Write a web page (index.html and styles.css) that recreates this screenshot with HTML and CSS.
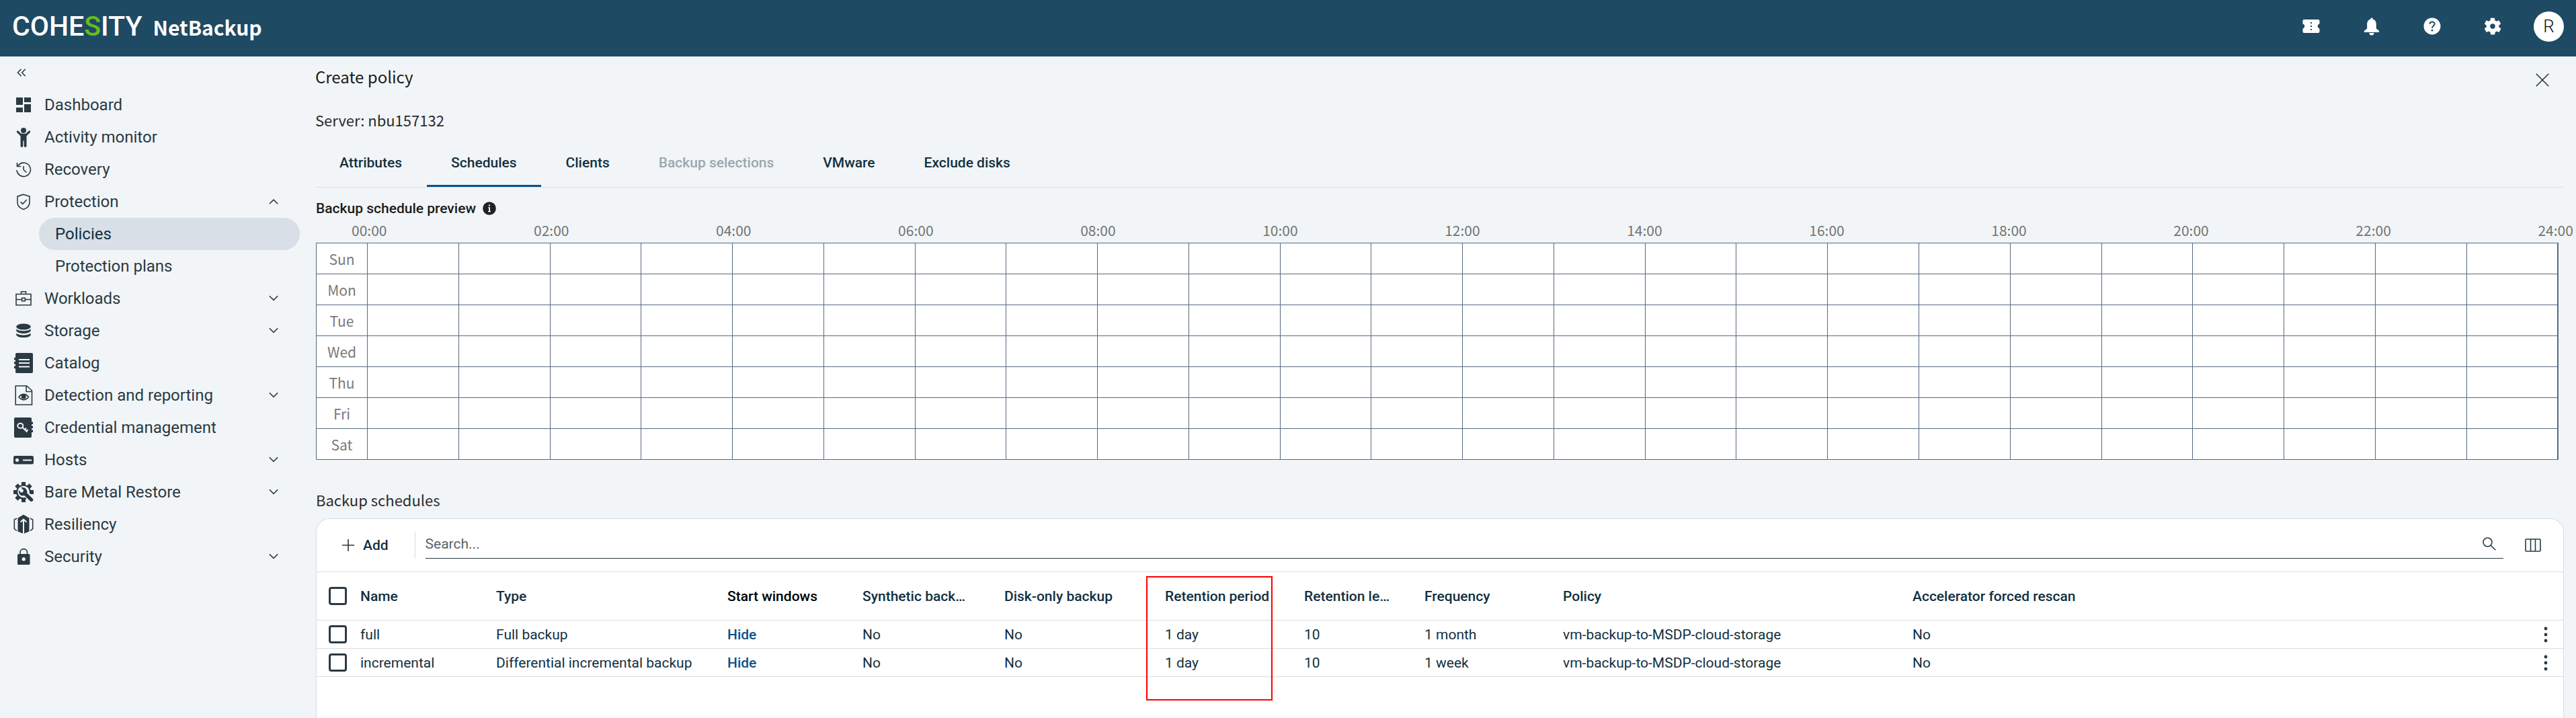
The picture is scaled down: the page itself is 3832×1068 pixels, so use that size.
FILE: index.html
```html
<!DOCTYPE html>
<html lang="en">
<head>
<meta charset="utf-8">
<title>Create policy - NetBackup</title>
<link rel="stylesheet" href="styles.css">
</head>
<body>
<header class="topbar">
  <a class="brand" href="#"><span class="brand-name">COHE<span class="brand-accent">S</span>ITY</span><span class="product">NetBackup</span></a>
  <div class="top-actions">
    <button class="icon-btn" aria-label="Licenses"><svg width="30" height="30" viewBox="0 0 30 30"><path fill="#fff" d="M4.500 5h21a2 2 0 0 1 2 2v4.500a3.600 3.600 0 0 0 0 7V23a2 2 0 0 1-2 2h-21a2 2 0 0 1-2-2v-4.500a3.600 3.600 0 0 0 0-7V7a2 2 0 0 1 2-2z"/><path stroke="#1e4a63" stroke-width="2" stroke-dasharray="2 3" d="M15 9v13"/></svg></button>
    <button class="icon-btn" aria-label="Notifications"><svg width="30" height="30" viewBox="0 0 30 30"><path fill="#fff" d="M15 2.500c1.200 0 1.800.8 1.800 1.900 3.200.9 5 3.700 5 7.100v7l4.200 3.200V24H4v-2.300l4.200-3.200v-7c0-3.400 1.800-6.200 5-7.100 0-1.100.6-1.900 1.800-1.900zM11.500 25h7a3.500 3.500 0 0 1-7 0z"/></svg></button>
    <button class="icon-btn" aria-label="Help"><svg width="30" height="30" viewBox="0 0 30 30"><circle cx="15" cy="15" r="12.500" fill="#fff"/><path fill="none" stroke="#1e4a63" stroke-width="2" d="M11.500 11.800c0-4.500 7.200-4.500 7.200-.2 0 2.700-3.700 3.200-3.700 6.200"/><circle cx="15" cy="21.200" r="1.400" fill="#1e4a63"/></svg></button>
    <button class="icon-btn" aria-label="Settings"><svg width="30" height="30" viewBox="0 0 24 24"><path fill="#fff" d="M19.400 13c0-.3.100-.6.100-1s0-.7-.1-1l2.100-1.600c.2-.2.200-.4.100-.6l-2-3.500c-.1-.2-.4-.3-.6-.2l-2.500 1c-.5-.4-1.100-.7-1.700-1l-.4-2.600c0-.2-.2-.4-.5-.4h-4c-.2 0-.5.200-.5.400L9.200 5.100c-.6.3-1.200.6-1.700 1L5 5.100c-.2-.1-.5 0-.6.200l-2 3.500c-.1.200-.1.500.1.600L4.600 11c0 .3-.1.600-.1 1s0 .7.100 1l-2.100 1.600c-.2.200-.2.400-.1.600l2 3.500c.1.200.4.300.6.200l2.500-1c.5.400 1.100.7 1.700 1l.4 2.600c0 .2.200.4.500.4h4c.2 0 .5-.2.500-.4l.4-2.600c.6-.3 1.200-.6 1.700-1l2.500 1c.2.100.5 0 .6-.2l2-3.500c.1-.2.100-.5-.1-.6L19.400 13zM12 15a3 3 0 1 1 0-6 3 3 0 0 1 0 6z"/></svg></button>
    <button class="avatar" aria-label="Account">R</button>
  </div>
</header>
<div class="shell">
<nav class="sidebar" aria-label="Main">
  <button class="collapse" aria-label="Collapse menu"><svg width="14" height="12" viewBox="0 0 14 12"><path class="line" d="M6.500.8L1.500 6l5 5.200M12.700.8L7.700 6l5 5.200"/></svg></button>
  <ul class="nav">
    <li><a href="#"><svg class="nav-icon" viewBox="0 0 30 30"><path d="M4 4h10v11H4zM16 4h10v7H16zM4 19h10v7H4zM16 14h10v12H16z"/></svg><span>Dashboard</span></a></li>
    <li><a href="#"><svg class="nav-icon" viewBox="0 0 30 30"><circle cx="15" cy="5" r="4"/><path d="M7 5.500l4.500 4.200h7L23 5.500a1.600 1.600 0 0 1 2 2.300l-5.500 5.400V28a1.800 1.800 0 0 1-3.800 0v-7.500h-1.400V28a1.800 1.800 0 0 1-3.800 0V13.200L5 7.800a1.600 1.600 0 0 1 2-2.300z"/></svg><span>Activity monitor</span></a></li>
    <li><a href="#"><svg class="nav-icon" viewBox="0 0 30 30"><path class="line" d="M5 16a10.200 10.200 0 1 0 2.800-7.700L5.300 10.700M5.500 5v5.500h5.800M15 10v5.500l4.500 4"/></svg><span>Recovery</span></a></li>
    <li><a href="#" aria-expanded="true"><svg class="nav-icon" viewBox="0 0 30 30"><path class="line" d="M15 4.200l9 3v9c0 5-4 8.500-9 10.300-5-1.800-9-5.300-9-10.300v-9zM10.500 15.300l3.300 3 6-6.300"/></svg><span>Protection</span><svg class="chev" viewBox="0 0 14 14"><path class="line" d="M.8 10.300L7 4.200l6.200 6.100"/></svg></a>
      <ul class="subnav">
        <li><a class="active" href="#">Policies</a></li>
        <li><a href="#">Protection plans</a></li>
      </ul></li>
    <li><a href="#"><svg class="nav-icon" viewBox="0 0 30 30"><path class="line" d="M4 8.500h22v16.300H4zM11.500 8.500V4.700h7v3.800M4 16.500h8.500M17.500 16.500H26M12.700 14.300h4.600v4.400h-4.600z"/></svg><span>Workloads</span><svg class="chev" viewBox="0 0 14 14"><path class="line" d="M.8 3.200L7 9.300l6.200-6.100"/></svg></a></li>
    <li><a href="#"><svg class="nav-icon" viewBox="0 0 30 30"><ellipse cx="15" cy="9" rx="10.800" ry="4.600"/><path d="M4.200 12.300c3 4 18.600 4 21.600 0v2.400c-1.500 5.600-20.100 5.600-21.600 0zM4.200 18.500c3 4 18.600 4 21.600 0v2.400c-1.500 5.600-20.100 5.600-21.600 0z"/></svg><span>Storage</span><svg class="chev" viewBox="0 0 14 14"><path class="line" d="M.8 3.200L7 9.300l6.200-6.100"/></svg></a></li>
    <li><a href="#"><svg class="nav-icon" viewBox="0 0 30 30"><rect x="3" width="26" height="30" rx="2"/><path d="M1 7h3v3.500H1zM1 13h3v3.500H1zM1 19.500h3V23H1z"/><path class="cut" d="M8 10h16M8 15h16M8 20.500h16"/></svg><span>Catalog</span></a></li>
    <li><a href="#"><svg class="nav-icon" viewBox="0 0 30 30"><path class="line" d="M3.200 1h16.500L27.500 8v21H3.200zM19 1v8.500h8.500M8 17.500c4-5.500 10.500-5.500 14.500 0-4 5.500-10.500 5.500-14.500 0z"/><circle cx="15.200" cy="17" r="3.600"/></svg><span>Detection and reporting</span><svg class="chev" viewBox="0 0 14 14"><path class="line" d="M.8 3.200L7 9.300l6.200-6.100"/></svg></a></li>
    <li><a href="#"><svg class="nav-icon" viewBox="0 0 30 30"><rect x="1" width="26" height="30" rx="2"/><path d="M26 6.500h3V10h-3zM26 12.500h3V16h-3zM26 18.500h3V22h-3z"/><ellipse class="cut" cx="10.300" cy="12.300" rx="4" ry="3.600"/><path class="cut" d="M13 14.500l7.500 7M16.800 18l2.200-2.200M19.300 20.200l2.200-2.200"/></svg><span>Credential management</span></a></li>
    <li><a href="#"><svg class="nav-icon" viewBox="0 0 30 30"><rect y="9" width="30" height="12.500" rx="2.500"/><circle cx="5.500" cy="15.300" r="2.600" fill="#f1f5f7"/><path class="cut" d="M14 15.500h13"/></svg><span>Hosts</span><svg class="chev" viewBox="0 0 14 14"><path class="line" d="M.8 3.200L7 9.300l6.200-6.100"/></svg></a></li>
    <li><a href="#"><svg class="nav-icon" viewBox="0 0 30 30"><circle cx="15" cy="15" r="11"/><path fill="none" stroke="#2b3a42" stroke-width="6" d="M15 0v5M15 25v5M0 15h5M25 15h5M4.400 4.400L8 8M22 8l3.600-3.600M4.400 25.600L8 22"/><circle cx="15" cy="14.500" r="8.800" fill="#f1f5f7"/><path fill="none" stroke="#f1f5f7" stroke-width="9" d="M19 18l9 9"/><path d="M11 8.300l4 3.700-.8 3-3 .8-3.300-3.800c-.8 6 3.600 9.500 8.300 8l8.800 8.500c2.600 1.800 5.800-1 3.700-3.800l-8.500-8.400c1.200-5.300-3.500-9.500-9.200-8z"/></svg><span>Bare Metal Restore</span><svg class="chev" viewBox="0 0 14 14"><path class="line" d="M.8 3.200L7 9.300l6.200-6.100"/></svg></a></li>
    <li><a href="#"><svg class="nav-icon" viewBox="0 0 30 30"><path d="M15 .5l8.500 5v20L15 29l-8.500-3.500v-20z"/><path class="line" d="M5 6L1.300 8v13.500L5 24.500M25 6l3.700 2v13.500L25 24.500"/><path class="cut" d="M15 29V8.500M10.500 11.500L15 7.500l4.500 4"/></svg><span>Resiliency</span></a></li>
    <li><a href="#"><svg class="nav-icon" viewBox="0 0 30 30"><rect x="6" y="11" width="18.500" height="16" rx="1.500"/><path class="line" d="M10 12V8.500c0-6.500 10.500-6.500 10.500 0V12"/><circle cx="15.200" cy="18.700" r="2.600" fill="#f1f5f7"/></svg><span>Security</span><svg class="chev" viewBox="0 0 14 14"><path class="line" d="M.8 3.200L7 9.300l6.200-6.100"/></svg></a></li>
  </ul>
</nav>
<main class="main">
  <div class="title-row">
    <h1>Create policy</h1>
    <button class="close" aria-label="Close"><svg width="20" height="20" viewBox="0 0 20 20"><path class="line" d="M.7.7l18.600 18.600M19.300.7L.7 19.300"/></svg></button>
  </div>
  <p class="server">Server: nbu157132</p>
  <div class="tabs" role="tablist">
    <button role="tab">Attributes</button>
    <button role="tab" class="selected" aria-selected="true">Schedules</button>
    <button role="tab">Clients</button>
    <button role="tab" disabled>Backup selections</button>
    <button role="tab">VMware</button>
    <button role="tab">Exclude disks</button>
  </div>
  <h2 class="preview-title">Backup schedule preview <svg width="20" height="20" viewBox="0 0 20 20"><circle cx="10" cy="10" r="9.800" fill="#1f2223"/><path fill="#fff" d="M9 4.500h2v2H9zM8.200 8.200H11V14h1v1.200H8V14h1.200V9.400h-1z"/></svg></h2>
  <div class="hours"><span>00:00</span><span>02:00</span><span>04:00</span><span>06:00</span><span>08:00</span><span>10:00</span><span>12:00</span><span>14:00</span><span>16:00</span><span>18:00</span><span>20:00</span><span>22:00</span><span>24:00</span></div>
  <table class="week">
    <tr><th scope="row">Sun</th><td></td><td></td><td></td><td></td><td></td><td></td><td></td><td></td><td></td><td></td><td></td><td></td><td></td><td></td><td></td><td></td><td></td><td></td><td></td><td></td><td></td><td></td><td></td><td></td></tr>
    <tr><th scope="row">Mon</th><td></td><td></td><td></td><td></td><td></td><td></td><td></td><td></td><td></td><td></td><td></td><td></td><td></td><td></td><td></td><td></td><td></td><td></td><td></td><td></td><td></td><td></td><td></td><td></td></tr>
    <tr><th scope="row">Tue</th><td></td><td></td><td></td><td></td><td></td><td></td><td></td><td></td><td></td><td></td><td></td><td></td><td></td><td></td><td></td><td></td><td></td><td></td><td></td><td></td><td></td><td></td><td></td><td></td></tr>
    <tr><th scope="row">Wed</th><td></td><td></td><td></td><td></td><td></td><td></td><td></td><td></td><td></td><td></td><td></td><td></td><td></td><td></td><td></td><td></td><td></td><td></td><td></td><td></td><td></td><td></td><td></td><td></td></tr>
    <tr><th scope="row">Thu</th><td></td><td></td><td></td><td></td><td></td><td></td><td></td><td></td><td></td><td></td><td></td><td></td><td></td><td></td><td></td><td></td><td></td><td></td><td></td><td></td><td></td><td></td><td></td><td></td></tr>
    <tr><th scope="row">Fri</th><td></td><td></td><td></td><td></td><td></td><td></td><td></td><td></td><td></td><td></td><td></td><td></td><td></td><td></td><td></td><td></td><td></td><td></td><td></td><td></td><td></td><td></td><td></td><td></td></tr>
    <tr><th scope="row">Sat</th><td></td><td></td><td></td><td></td><td></td><td></td><td></td><td></td><td></td><td></td><td></td><td></td><td></td><td></td><td></td><td></td><td></td><td></td><td></td><td></td><td></td><td></td><td></td><td></td></tr>
  </table>
  <h2 class="list-title">Backup schedules</h2>
  <section class="card">
    <div class="toolbar">
      <button class="add"><svg width="18" height="18" viewBox="0 0 18 18"><path class="line" d="M9 0v18M0 9h18"/></svg>Add</button>
      <div class="search">
        <input type="text" placeholder="Search..." aria-label="Search">
        <svg width="20" height="20" viewBox="0 0 20 20"><circle class="line" cx="7.500" cy="7.500" r="6.500"/><path class="line" d="M12 12l7.300 7.300"/></svg>
      </div>
      <button class="columns" aria-label="Columns"><svg width="24" height="20" viewBox="0 0 24 20"><rect class="line" x="1" y="1" width="22" height="18" rx="1"/><path class="line" d="M8.500 1v18M15.500 1v18"/></svg></button>
    </div>
    <table class="list">
      <colgroup><col class="c-check"><col class="c-name"><col class="c-type"><col class="c-start"><col class="c-synth"><col class="c-disk"><col class="c-period"><col class="c-level"><col class="c-freq"><col class="c-policy"><col><col class="c-menu"></colgroup>
      <thead>
        <tr><th><input type="checkbox" aria-label="Select all"></th><th>Name</th><th>Type</th><th class="plain">Start windows</th><th>Synthetic back…</th><th>Disk-only backup</th><th class="marked">Retention period</th><th>Retention le…</th><th>Frequency</th><th>Policy</th><th>Accelerator forced rescan</th><th></th></tr>
      </thead>
      <tbody>
        <tr><td><input type="checkbox" aria-label="Select full"></td><td>full</td><td>Full backup</td><td><a href="#">Hide</a></td><td>No</td><td>No</td><td>1 day</td><td>10</td><td>1 month</td><td>vm-backup-to-MSDP-cloud-storage</td><td>No</td><td><button class="menu" aria-label="Actions for full"><svg width="6" height="24" viewBox="0 0 6 24"><circle cx="3" cy="3" r="2.400"/><circle cx="3" cy="12" r="2.400"/><circle cx="3" cy="21" r="2.400"/></svg></button></td></tr>
        <tr><td><input type="checkbox" aria-label="Select incremental"></td><td>incremental</td><td>Differential incremental backup</td><td><a href="#">Hide</a></td><td>No</td><td>No</td><td>1 day</td><td>10</td><td>1 week</td><td>vm-backup-to-MSDP-cloud-storage</td><td>No</td><td><button class="menu" aria-label="Actions for incremental"><svg width="6" height="24" viewBox="0 0 6 24"><circle cx="3" cy="3" r="2.400"/><circle cx="3" cy="12" r="2.400"/><circle cx="3" cy="21" r="2.400"/></svg></button></td></tr>
      </tbody>
    </table>
  </section>
</main>
</div>
</body>
</html>
```
FILE: styles.css
```css
:root {
  --ink: #2b3a42;
  --text: #12303f;
  --page: #f1f5f7;
  --rule: #dadcde;
  --grid: #586a7f;
  --blue: #06518c;
  --sans: Roboto, "Liberation Sans", sans-serif;
  --source: "Noto Sans CJK SC", "Noto Sans", sans-serif;
}

*, *::after { box-sizing: border-box; }

body {
  margin: 0;
  min-height: 100vh;
  display: flex;
  flex-direction: column;
  background: var(--page);
  color: var(--text);
  font: 400 21px/28px var(--sans);
}

button {
  padding: 0;
  border: 0;
  background: none;
  color: inherit;
  font: inherit;
  cursor: pointer;
}

svg { display: block; flex: none; fill: var(--ink); }
.line { fill: none; stroke: var(--ink); stroke-width: 1.600; }
.cut { fill: none; stroke: var(--page); stroke-width: 2; }

/* Top bar */
.topbar {
  display: flex;
  align-items: center;
  justify-content: space-between;
  height: 84px;
  padding: 0 18px 6px 18px;
  background: #1e4a63;
}
.brand {
  display: flex;
  align-items: baseline;
  gap: 16px;
  color: #fff;
  text-decoration: none;
}
.brand-name { font: 500 41px/48px var(--sans); }
.brand-accent { color: #67bd1b; }
.product { font: 700 30px/48px var(--source); }
.top-actions { display: flex; align-items: center; gap: 60px; }
.avatar {
  width: 45px;
  height: 45px;
  margin-left: -14px;
  border-radius: 50%;
  background: #fff;
  color: #111;
  font-size: 26px;
  font-weight: 300;
}

/* Side navigation */
.shell { display: flex; flex: 1; }
.sidebar { flex: none; width: 469px; }
.collapse { display: block; margin: 18px 0 18px 25px; }
.nav, .subnav { margin: 0; padding: 0; list-style: none; }
.nav a {
  display: flex;
  align-items: center;
  gap: 16px;
  height: 48px;
  padding: 0 55px 0 20px;
  color: var(--ink);
  font-size: 24px;
  text-decoration: none;
}
.nav-icon { width: 30px; height: 30px; }
.chev { width: 14px; height: 14px; margin-left: auto; }
.subnav a { margin: 0 23px 0 58px; padding: 0 24px; border-radius: 24px; }
.subnav .active { background: #d8dfe7; color: var(--text); }

/* Page */
.main {
  flex: 1;
  min-width: 0;
  display: flex;
  flex-direction: column;
  padding: 12px 18px 0 0;
}
h1, h2, p { margin: 0; }
.title-row {
  display: flex;
  align-items: center;
  justify-content: space-between;
  padding-right: 22px;
}
.close { padding-top: 10px; }
h1 { font: 400 24px/36px var(--source); color: #1b1b1b; }
.server { margin-top: 30px; font: 400 22px/32px var(--source); color: #2b2b2b; }

.tabs { display: flex; gap: 1px; margin-top: 12px; border-bottom: 1px solid #dbe1e8; }
.tabs button {
  height: 72px;
  padding: 0 36px;
  border: solid transparent;
  border-width: 3px 0;
  font-weight: 500;
}
.tabs .selected { border-bottom-color: var(--blue); }
.tabs button:disabled { color: #9aa7af; }

.preview-title {
  display: flex;
  align-items: center;
  gap: 10px;
  margin: 17px 0 4px 1px;
  font: 500 21px/28px var(--sans);
  color: #1b1b1b;
}

/* Weekly grid */
.hours {
  display: flex;
  justify-content: space-between;
  margin: 0 -14px 5px 54px;
  font: 400 21px/28px var(--source);
  color: #737373;
}
.week {
  table-layout: fixed;
  width: calc(100% - 9px);
  margin-left: 1px;
  border-collapse: collapse;
  border-right: 2px solid var(--grid);
  background: #fff;
}
.week th, .week td { height: 46px; padding: 0; border: 1px solid var(--grid); }
.week th { width: 76px; font: 400 21px/28px var(--source); color: #7a7a7a; }
.week td:last-child { border-right-width: 2px; }

.list-title { margin: 43px 0 12px 1px; font: 400 22px/32px var(--source); color: #2b2b2b; }

/* Schedule list */
.card {
  flex: 1;
  margin-left: 1px;
  border: 1px solid var(--rule);
  border-bottom: 0;
  border-radius: 20px 20px 0 0;
  background: #fff;
}
.toolbar {
  display: flex;
  align-items: center;
  height: 79px;
  padding: 0 33px 0 38px;
  border-bottom: 1px solid var(--rule);
}
.add {
  display: flex;
  align-items: center;
  gap: 13px;
  height: 40px;
  padding-right: 39px;
  border-right: 1px solid var(--rule);
  font-weight: 500;
}
.search {
  flex: 1;
  display: flex;
  align-items: center;
  height: 40px;
  margin: 0 32px 0 15px;
  padding: 0 11px 4px 0;
  border-bottom: 1px solid var(--ink);
}
.search input {
  flex: 1;
  padding: 0;
  border: 0;
  outline: 0;
  background: none;
  font: inherit;
}
.search input::placeholder { color: #5b6368; opacity: 1; }

.list { table-layout: fixed; width: 100%; border-collapse: separate; border-spacing: 0; }
.list th, .list td {
  height: 42px;
  padding: 0;
  border-bottom: 1px solid var(--rule);
  text-align: left;
  white-space: nowrap;
}
.list th { height: 72px; font-weight: 500; }
.list .plain { color: #000; }
.list a { color: var(--blue); font-weight: 500; text-decoration: none; }
.list input {
  appearance: none;
  display: block;
  width: 27px;
  height: 27px;
  margin: 0 0 0 18px;
  border: 3px solid var(--ink);
  border-radius: 4px;
}
.menu { display: block; margin-left: auto; margin-right: 23px; }
.c-check { width: 65px; }
.c-name { width: 202px; }
.c-type { width: 344px; }
.c-start { width: 201px; }
.c-synth { width: 211px; }
.c-disk { width: 239px; }
.c-period { width: 207px; }
.c-level { width: 179px; }
.c-freq { width: 206px; }
.c-policy { width: 520px; }
.c-menu { width: 64px; }

/* Callout around the retention period column */
.marked { position: relative; }
.marked::after {
  content: "";
  position: absolute;
  top: 6px;
  left: -28px;
  width: 188px;
  height: 185px;
  border: 2px solid #f00;
}
```
